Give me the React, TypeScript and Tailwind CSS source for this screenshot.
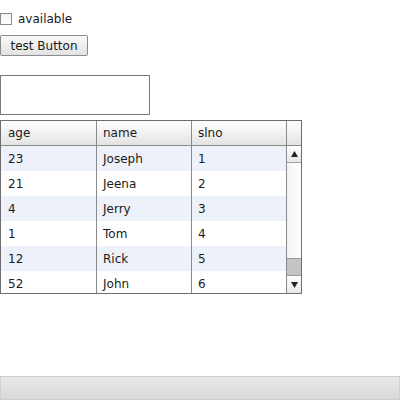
const rows = [
  { age: '23', name: 'Joseph', slno: '1' },
  { age: '21', name: 'Jeena', slno: '2' },
  { age: '4', name: 'Jerry', slno: '3' },
  { age: '1', name: 'Tom', slno: '4' },
  { age: '12', name: 'Rick', slno: '5' },
  { age: '52', name: 'John', slno: '6' },
];

export default function App() {
  return (
    <div className="min-h-[400px] w-[400px] flex flex-col bg-white text-[12px] text-[#1a1a1a] font-['DejaVu_Sans',sans-serif]">
      {/* Checkbox */}
      <div className="flex items-center mt-[13px] h-[12px]">
        <span className="w-[12px] h-[12px] border border-[#8a8a8a] bg-gradient-to-b from-[#f4f4f4] to-white" />
        <span className="ml-[6px] leading-none">available</span>
      </div>

      {/* Button */}
      <button className="mt-[10px] w-[88px] h-[21px] border border-[#8c8c8c] rounded-[2px] bg-gradient-to-b from-[#fafafa] to-[#e2e2e2] leading-none text-[12px] text-[#1a1a1a]">
        test Button
      </button>

      {/* Text box */}
      <div className="mt-[19px] w-[150px] h-[40px] border border-[#7a7a7a] bg-white" />

      {/* Table */}
      <div className="mt-[5px] w-[302px] border border-[#6e6e6e] flex flex-col">
        <div className="flex h-[25px] border-b border-[#8a8a8a] bg-gradient-to-b from-white to-[#e3e3e3]">
          <div className="w-[96px] border-r border-[#8a8a8a] pl-[7px] flex items-center">age</div>
          <div className="w-[95px] border-r border-[#8a8a8a] pl-[6px] flex items-center">name</div>
          <div className="w-[95px] border-r border-[#8a8a8a] pl-[6px] flex items-center">slno</div>
          <div className="flex-1" />
        </div>
        <div className="flex h-[147px] overflow-hidden">
          <div className="w-[285px] flex flex-col">
            {rows.map((r, i) => (
              <div
                key={r.slno}
                className={`flex h-[25px] shrink-0 ${i % 2 === 0 ? 'bg-[#edf2fa]' : 'bg-white'}`}
              >
                <div className="w-[96px] border-r border-[#8a8a8a] pl-[7px] flex items-center">{r.age}</div>
                <div className="w-[95px] border-r border-[#8a8a8a] pl-[6px] flex items-center">{r.name}</div>
                <div className="w-[94px] pl-[6px] flex items-center">{r.slno}</div>
              </div>
            ))}
          </div>
          {/* Scrollbar */}
          <div className="flex-1 border-l border-[#8a8a8a] flex flex-col bg-[#f7f7f7]">
            <div className="h-[17px] border-b border-[#a0a0a0] bg-gradient-to-b from-white to-[#e8e8e8] flex items-center justify-center">
              <svg width="7" height="6" viewBox="0 0 7 6">
                <path d="M3.5 0 L7 6 L0 6 Z" fill="#222" />
              </svg>
            </div>
            <div className="flex-1 bg-gradient-to-r from-[#f2f2f2] to-white" />
            <div className="h-[18px] border-y border-[#9a9a9a] bg-[#c4c4c4]" />
            <div className="h-[17px] bg-gradient-to-b from-white to-[#e8e8e8] flex items-center justify-center">
              <svg width="7" height="6" viewBox="0 0 7 6">
                <path d="M0 0 L7 0 L3.5 6 Z" fill="#222" />
              </svg>
            </div>
          </div>
        </div>
      </div>

      {/* Bottom bar */}
      <div className="mt-auto h-[24px] border border-[#cfcfcf] bg-gradient-to-b from-[#e8e8e8] to-[#d9d9d9]" />
    </div>
  );
}
